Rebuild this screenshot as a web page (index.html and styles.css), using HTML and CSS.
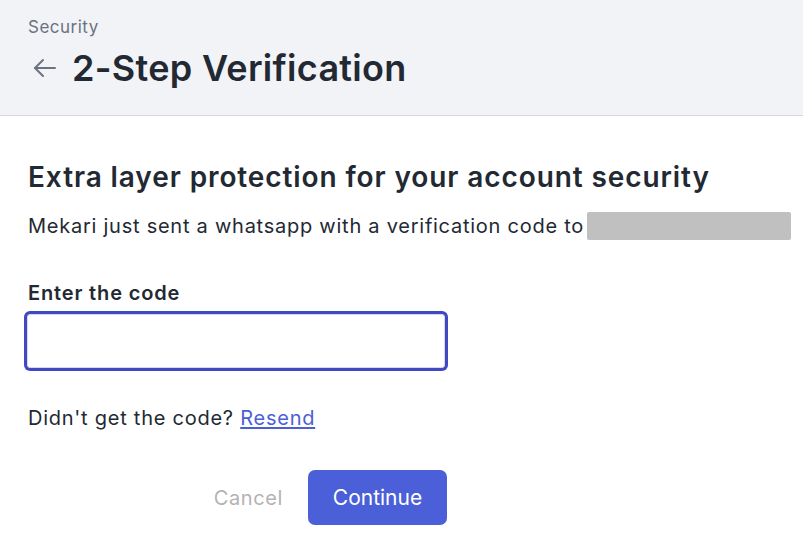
FILE: index.html
```html
<!DOCTYPE html>
<html lang="en">
<head>
<meta charset="utf-8">
<title>2-Step Verification</title>
<link rel="stylesheet" href="styles.css">
</head>
<body>
<header class="page-header">
  <div class="crumb">Security</div>
  <div class="title-row">
    <svg class="back-icon" width="26" height="26" viewBox="0 0 26 26" fill="none" stroke="#6b7280" stroke-width="2" stroke-linecap="round" stroke-linejoin="round">
      <path d="M23 13H3"/>
      <path d="M11 5L3 13L11 21"/>
    </svg>
    <h1 class="title">2-Step Verification</h1>
  </div>
</header>
<main class="content">
  <h2 class="heading">Extra layer protection for your account security</h2>
  <p class="desc"><span class="desc-text">Mekari just sent a whatsapp with a verification code to</span><span class="masked"></span></p>
  <label class="label" for="code">Enter the code</label>
  <input class="code-input" id="code" type="text">
  <p class="resend">Didn't get the code? <a href="#" class="link">Resend</a></p>
  <div class="actions">
    <button class="btn-cancel" type="button">Cancel</button>
    <button class="btn-primary" type="button">Continue</button>
  </div>
</main>
</body>
</html>
```
FILE: styles.css
```css
* { box-sizing: border-box; }
body {
  margin: 0;
  font-family: Inter, "Noto Sans", sans-serif;
  color: #232933;
  background: #ffffff;
}
.page-header {
  background: #f2f3f7;
  border-bottom: 1px solid #d3d6de;
  padding: 17px 28px 27px;
  height: 116px;
}
.crumb {
  font-size: 17px;
  line-height: 20px;
  letter-spacing: 0.5px;
  color: #6b7280;
}
.title-row {
  display: flex;
  align-items: center;
  margin-top: 11px;
  height: 40px;
}
.back-icon {
  margin-left: 4px;
  margin-right: 14px;
}
.title {
  margin: 0;
  font-size: 36px;
  line-height: 40px;
  font-weight: 600;
  color: #232933;
  letter-spacing: 0.3px;
}
.content {
  padding: 45px 28px 0;
}
.heading {
  margin: 0;
  font-size: 28px;
  line-height: 32px;
  font-weight: 600;
  letter-spacing: 0.9px;
  color: #232933;
}
.desc {
  display: flex;
  align-items: center;
  margin: 19px 0 0;
  font-size: 20px;
  line-height: 28px;
  letter-spacing: 0.75px;
  color: #232933;
  white-space: nowrap;
}
.desc-text {
  flex-shrink: 0;
}
.masked {
  display: inline-block;
  flex-shrink: 0;
  width: 204px;
  height: 28px;
  margin-left: 3px;
  background: #c0c0c0;
  border-radius: 2px;
}
.label {
  display: block;
  margin-top: 41px;
  font-size: 20px;
  line-height: 24px;
  font-weight: 600;
  letter-spacing: 0.85px;
  color: #232933;
}
.code-input {
  display: block;
  margin: 9px 0 0 -1px;
  width: 418px;
  height: 54px;
  border: 1px solid #d6d9e3;
  border-radius: 3px;
  box-shadow: 0 0 0 3px #4149c2;
  outline: none;
  font-family: inherit;
  font-size: 18px;
  padding: 0 12px;
}
.resend {
  margin: 38px 0 0;
  font-size: 20px;
  line-height: 24px;
  letter-spacing: 0.75px;
  color: #232933;
}
.link {
  color: #4b5fd6;
  text-decoration: underline;
  text-underline-offset: 2px;
}
.actions {
  display: flex;
  justify-content: flex-end;
  align-items: center;
  width: 419px;
  margin-top: 40px;
  gap: 25px;
}
.btn-cancel {
  background: none;
  border: none;
  padding: 0;
  font-family: inherit;
  font-size: 20px;
  letter-spacing: 0.6px;
  color: #b3b3b3;
  cursor: pointer;
}
.btn-primary {
  width: 139px;
  height: 55px;
  border: none;
  border-radius: 7px;
  background: #4b5fd8;
  color: #ffffff;
  font-family: inherit;
  font-size: 21px;
  cursor: pointer;
}
```
